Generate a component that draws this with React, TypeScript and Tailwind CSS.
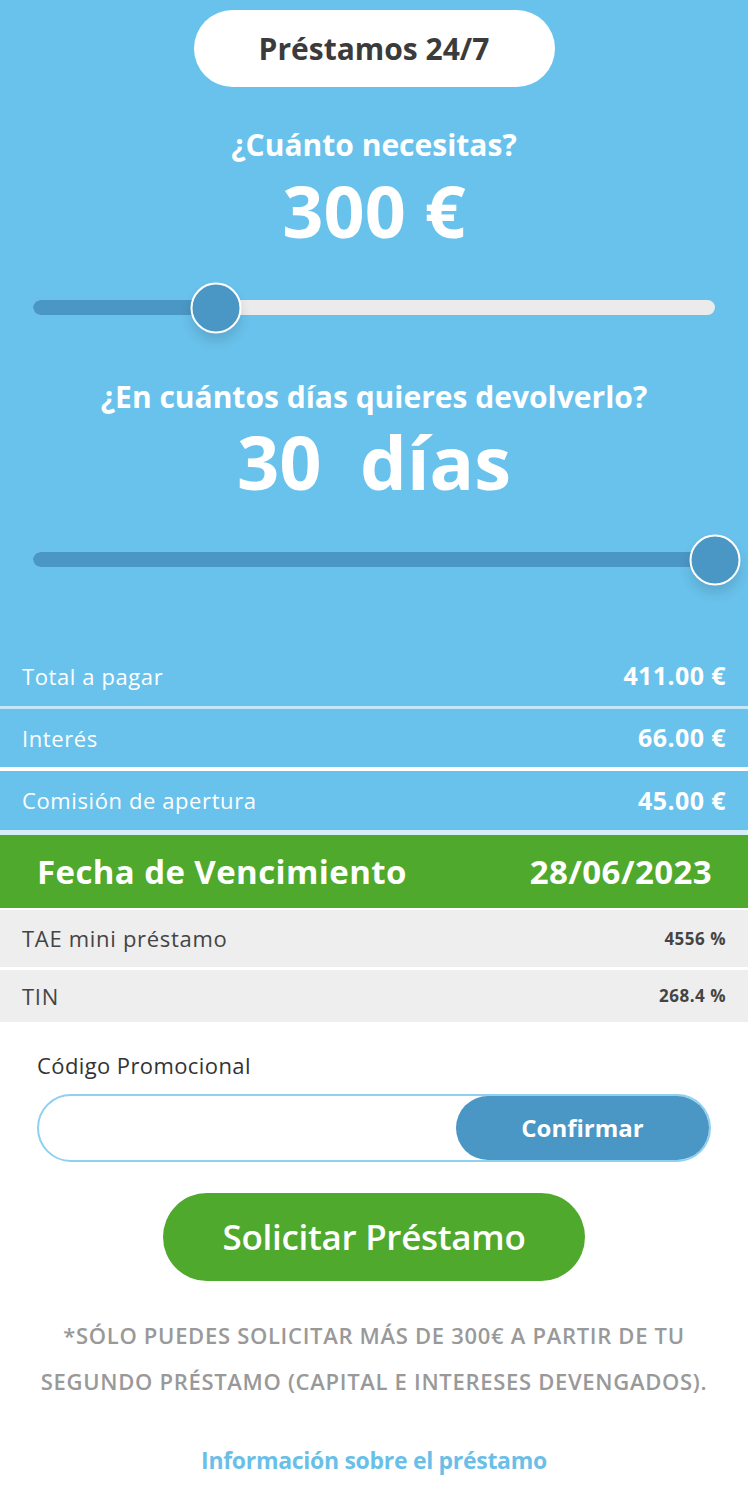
const rows = [
  { label: "Total a pagar", value: "411.00 €", h: "h-[60px]", line: "h-[3px] bg-[#c4e6f8]" },
  { label: "Interés", value: "66.00 €", h: "h-[58px]", line: "h-[4px] bg-white" },
  { label: "Comisión de apertura", value: "45.00 €", h: "h-[59px]", line: "h-[5px] bg-[#d6eef9]" },
];

const Slider = ({ percent, filledToEnd }: { percent: number; filledToEnd?: boolean }) => {
  return (
    <div className="relative mx-[33px] h-[15px] rounded-full bg-[#ebebeb]">
      <div
        className="h-full rounded-full bg-[#4a96c4]"
        style={{ width: filledToEnd ? "100%" : `${percent}%` }}
      />
      <div
        className="absolute top-1/2 h-[51px] w-[51px] -translate-x-1/2 -translate-y-1/2 rounded-full border-2 border-white bg-[#4a96c4] shadow-[0_8px_12px_rgba(0,0,0,0.12)]"
        style={{ left: `${percent}%` }}
      />
    </div>
  );
};

const App = () => {
  return (
    <div
      className="w-[748px] min-h-[1506px] bg-white"
      style={{ fontFamily: '"Open Sans", "Liberation Sans", sans-serif' }}
    >
      <div className="bg-[#69c2ec] pt-[10px]">
        <div className="flex justify-center">
          <div className="flex h-[77px] w-[361px] items-center justify-center rounded-full bg-white text-[30px] font-bold text-[#3b3b3b]">
            Préstamos 24/7
          </div>
        </div>

        <div className="mt-[38px] text-center text-[30px] font-bold leading-[40px] text-white">
          ¿Cuánto necesitas?
        </div>
        <div className="mt-[5px] text-center text-[72px] font-bold leading-[80px] text-white">
          300 €
        </div>

        <div className="mt-[50px]">
          <Slider percent={26.9} />
        </div>

        <div className="mt-[62px] text-center text-[30px] font-bold leading-[40px] text-white">
          ¿En cuántos días quieres devolverlo?
        </div>
        <div className="mt-[3px] text-center text-[74px] font-bold leading-[84px] text-white">
          30&nbsp; días
        </div>

        <div className="mt-[48px]">
          <Slider percent={100} filledToEnd />
        </div>

        <div className="h-[79px]" />

        {rows.map((row) => (
          <div key={row.label}>
            <div className={`flex ${row.h} items-center justify-between px-[22px] text-white`}>
              <span className="text-[22px] tracking-[0.6px]">{row.label}</span>
              <span className="text-[25px] font-bold tracking-[0.4px]">{row.value}</span>
            </div>
            <div className={row.line} />
          </div>
        ))}
      </div>

      <div className="flex h-[73px] items-center justify-between bg-[#4ea92c] pl-[37px] pr-[36px] text-[33px] font-bold tracking-[0.4px] text-white">
        <span>Fecha de Vencimiento</span>
        <span>28/06/2023</span>
      </div>

      <div className="h-[2px] bg-white" />
      <div className="flex h-[57px] items-center justify-between bg-[#eeeeee] px-[22px] text-[#444]">
        <span className="text-[22px] tracking-[0.7px]">TAE mini préstamo</span>
        <span className="text-[17px] font-bold tracking-[0.5px]">4556 %</span>
      </div>
      <div className="h-[3px] bg-white" />
      <div className="flex h-[52px] items-center justify-between bg-[#eeeeee] px-[22px] text-[#444]">
        <span className="text-[22px] tracking-[0.7px]">TIN</span>
        <span className="text-[17px] font-bold tracking-[0.5px]">268.4 %</span>
      </div>

      <div className="px-[37px] pt-[28px]">
        <div className="text-[22px] leading-[30px] tracking-[0.4px] text-[#333]">
          Código Promocional
        </div>
        <div className="mt-[14px] flex h-[68px] items-center rounded-full border-2 border-[#8fd0f1] bg-white">
          <input className="h-full min-w-0 flex-1 rounded-l-full bg-transparent pl-6 outline-none" />
          <button className="h-[64px] w-[253px] rounded-full bg-[#4a96c4] text-[24px] font-bold text-white">
            Confirmar
          </button>
        </div>
      </div>

      <div className="mt-[31px] flex justify-center">
        <button className="h-[88px] w-[422px] rounded-full bg-[#4ea92c] text-[35px] font-semibold tracking-[-0.3px] text-white">
          Solicitar Préstamo
        </button>
      </div>

      <div className="mt-[31px] px-[10px] text-center text-[22px] font-semibold uppercase leading-[46px] tracking-[0.7px] text-[#999]">
        *Sólo puedes solicitar más de 300€ a partir de tu
        <br />
        segundo préstamo (capital e intereses devengados).
      </div>

      <div className="mt-[40px] text-center text-[23px] font-bold leading-[32px] tracking-[-0.3px] text-[#6abfe8]">
        Información sobre el préstamo
      </div>
    </div>
  );
};

export default App;
